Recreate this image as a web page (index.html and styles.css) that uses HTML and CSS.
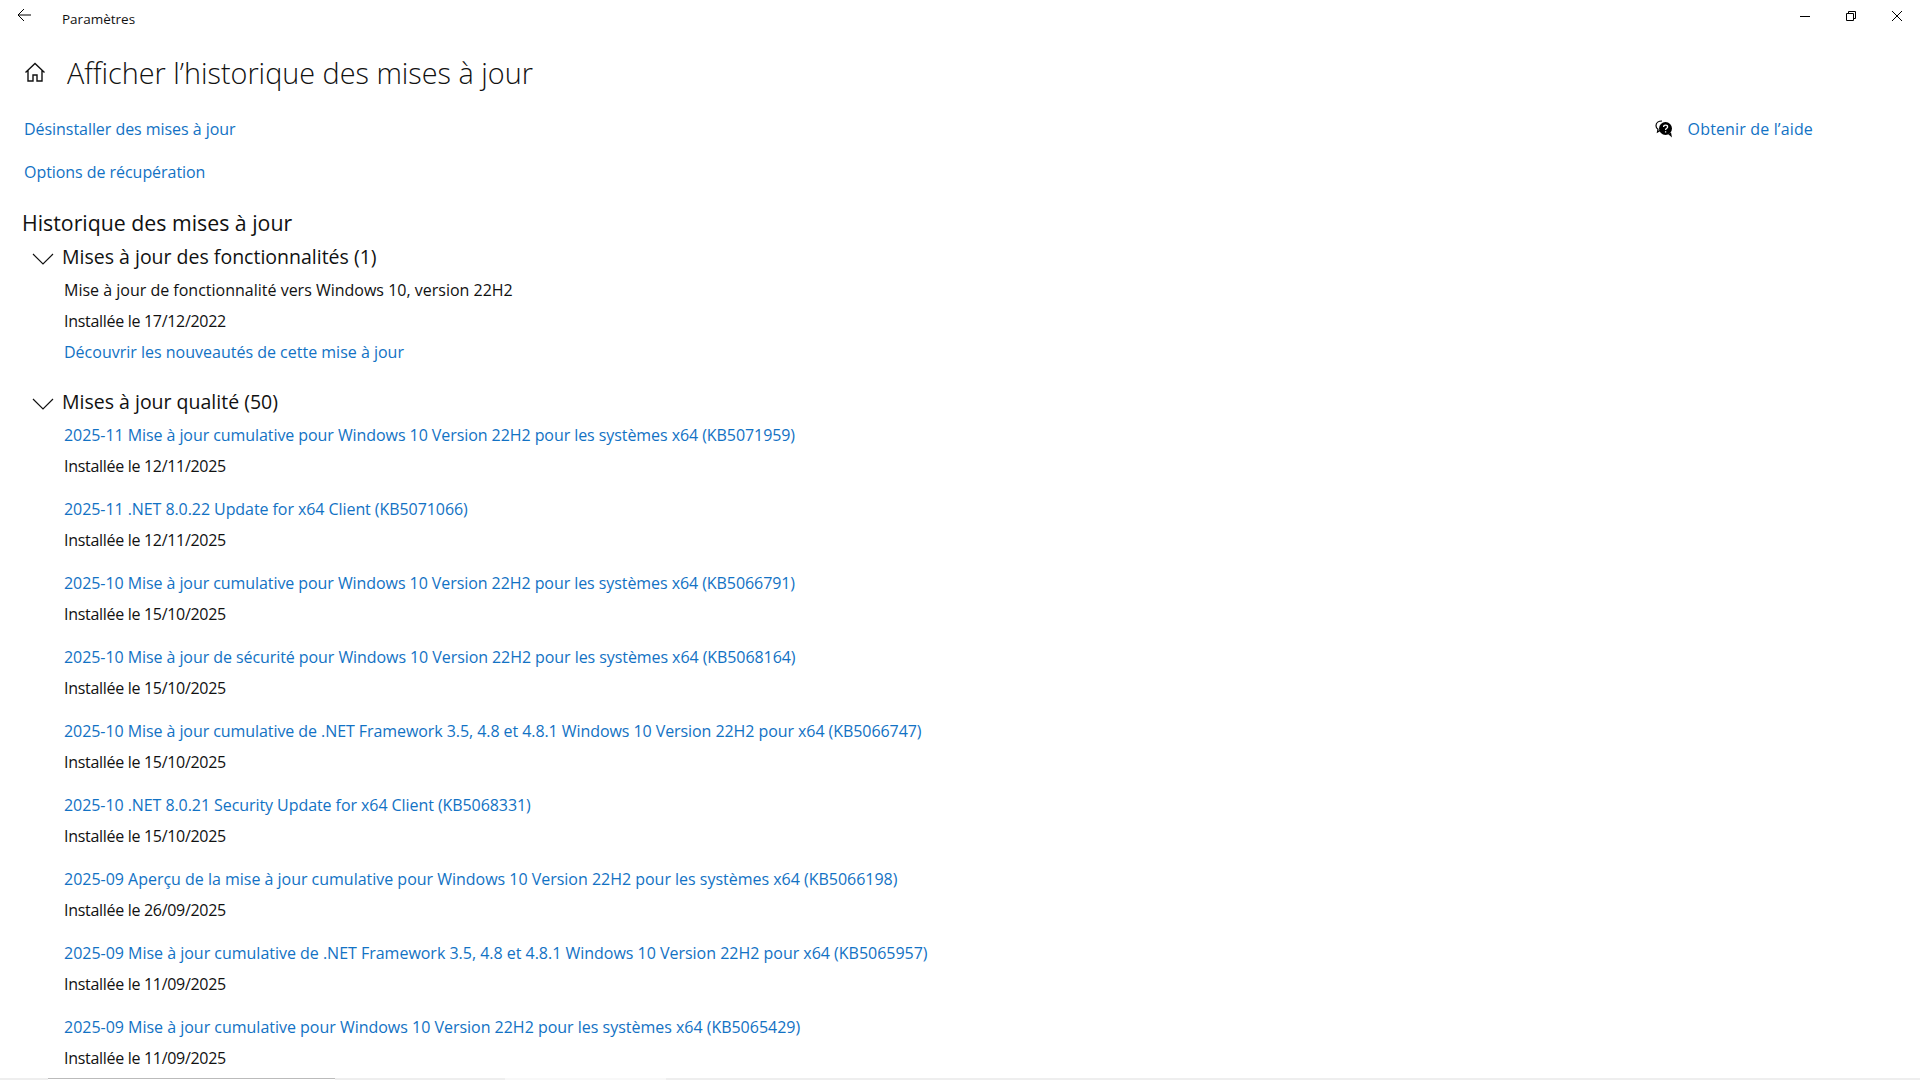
FILE: index.html
```html
<!DOCTYPE html>
<html lang="fr">
<head>
    <meta charset="UTF-8">
    <title>Paramètres</title>
    <link rel="stylesheet" href="styles.css">
</head>
<body>
    <header class="titlebar">
        <svg class="back" width="16" height="16" viewBox="0 0 16 16"><path d="M15 8H2M8 2L2 8l6 6" fill="none" stroke="#000" stroke-width="1"/></svg>
        <span class="app-name">Paramètres</span>
        <div class="win-controls">
            <svg width="12" height="12" viewBox="0 0 12 12"><path d="M1 6.500h10" stroke="#000" fill="none"/></svg>
            <svg width="12" height="12" viewBox="0 0 12 12"><path d="M1.500 3.500h7v7h-7zM3.500 3.500v-2h7v7h-2" stroke="#000" fill="none"/></svg>
            <svg width="12" height="12" viewBox="0 0 12 12"><path d="M1 1l10 10M11 1L1 11" stroke="#000" fill="none"/></svg>
        </div>
    </header>

    <div class="page-title">
        <svg width="22" height="22" viewBox="0 0 22 22"><path d="M1.500 11.500L11 2.500l9.500 9M4 9.500V20h5v-6h4v6h5V9.500" fill="none" stroke="#111" stroke-width="1.400"/></svg>
        <h1>Afficher l’historique des mises à jour</h1>
    </div>

    <div class="top-links">
        <div class="left-links">
            <a href="#">Désinstaller des mises à jour</a>
            <a href="#">Options de récupération</a>
        </div>
        <div class="help">
            <svg width="18" height="18" viewBox="0 0 18 18">
                <path d="M7 1C3.600 1 1 3 1 5.700c0 1.500.8 2.800 2 3.600L2.500 12l3-1.800" fill="none" stroke="#000" stroke-width="1.200"/>
                <circle cx="10.500" cy="8.500" r="6.500" fill="#000"/>
                <path d="M13 14l4 3.500-1-5z" fill="#000"/>
                <path d="M8.600 7c0-1.200.9-1.800 2-1.800s2 .7 2 1.700c0 1.500-2 1.300-2 3M10.600 11.200v1.300" fill="none" stroke="#fff" stroke-width="1.300"/>
            </svg>
            <a href="#">Obtenir de l’aide</a>
        </div>
    </div>

    <h2>Historique des mises à jour</h2>

    <!-- Fonctionnalités -->
    <section class="group">
        <div class="group-head">
            <svg class="chevron" width="22" height="12" viewBox="0 0 22 12"><path d="M1 1l10 10L21 1" fill="none" stroke="#111" stroke-width="1.200"/></svg>
            <h3>Mises à jour des fonctionnalités (1)</h3>
        </div>
        <div class="feature">
            <p>Mise à jour de fonctionnalité vers Windows 10, version 22H2</p>
            <p class="date">Installée le 17/12/2022</p>
            <p><a href="#">Découvrir les nouveautés de cette mise à jour</a></p>
        </div>
    </section>

    <!-- Qualité -->
    <section class="group quality">
        <div class="group-head">
            <svg class="chevron" width="22" height="12" viewBox="0 0 22 12"><path d="M1 1l10 10L21 1" fill="none" stroke="#111" stroke-width="1.200"/></svg>
            <h3>Mises à jour qualité (50)</h3>
        </div>
        <div class="update"><a href="#">2025-11 Mise à jour cumulative pour Windows 10 Version 22H2 pour les systèmes x64 (KB5071959)</a><p class="date">Installée le 12/11/2025</p></div>
        <div class="update"><a href="#">2025-11 .NET 8.0.22 Update for x64 Client (KB5071066)</a><p class="date">Installée le 12/11/2025</p></div>
        <div class="update"><a href="#">2025-10 Mise à jour cumulative pour Windows 10 Version 22H2 pour les systèmes x64 (KB5066791)</a><p class="date">Installée le 15/10/2025</p></div>
        <div class="update"><a href="#">2025-10 Mise à jour de sécurité pour Windows 10 Version 22H2 pour les systèmes x64 (KB5068164)</a><p class="date">Installée le 15/10/2025</p></div>
        <div class="update"><a href="#">2025-10 Mise à jour cumulative de .NET Framework 3.5, 4.8 et 4.8.1 Windows 10 Version 22H2 pour x64 (KB5066747)</a><p class="date">Installée le 15/10/2025</p></div>
        <div class="update"><a href="#">2025-10 .NET 8.0.21 Security Update for x64 Client (KB5068331)</a><p class="date">Installée le 15/10/2025</p></div>
        <div class="update loose"><a href="#">2025-09 Aperçu de la mise à jour cumulative pour Windows 10 Version 22H2 pour les systèmes x64 (KB5066198)</a><p class="date">Installée le 26/09/2025</p></div>
        <div class="update loose"><a href="#">2025-09 Mise à jour cumulative de .NET Framework 3.5, 4.8 et 4.8.1 Windows 10 Version 22H2 pour x64 (KB5065957)</a><p class="date">Installée le 11/09/2025</p></div>
        <div class="update loose"><a href="#">2025-09 Mise à jour cumulative pour Windows 10 Version 22H2 pour les systèmes x64 (KB5065429)</a><p class="date">Installée le 11/09/2025</p></div>
    </section>

    <div class="taskbar-edge">
        <span class="edge-tab"></span>
        <span class="edge-light"></span>
    </div>
</body>
</html>
```

FILE: styles.css
```css
html, body {
    height: 100%;
}
body {
    font-family: "Open Sans", "Noto Sans", sans-serif;
    font-size: 16px;
    color: #111;
    background-color: #fff;
    margin: 0;
    padding: 0;
    overflow: hidden;
    position: relative;
}
a {
    color: #1272c4;
    text-decoration: none;
}
p {
    margin: 0;
}
.titlebar {
    height: 32px;
    display: flex;
    align-items: center;
    padding-left: 16px;
}
.back {
    margin-top: -3px;
}
.app-name {
    margin-left: 30px;
    font-size: 13.5px;
    margin-top: 5px;
}
.win-controls {
    margin-left: auto;
    display: flex;
    gap: 34px;
    padding-right: 17px;
    margin-top: -1px;
}
.page-title {
    display: flex;
    align-items: center;
    padding-left: 24px;
    margin-top: 12px;
    height: 56px;
}
h1 {
    font-size: 28.8px;
    font-weight: 300;
    margin: 0 0 0 21px;
}
.top-links {
    display: flex;
    justify-content: space-between;
    padding: 17px 0 0 24px;
}
.left-links {
    display: flex;
    flex-direction: column;
    gap: 19px;
}
.left-links a, .help a {
    line-height: 24px;
    font-size: 16px;
    letter-spacing: -0.05px;
}
.help a {
    letter-spacing: 0.15px;
}
.help {
    display: flex;
    align-items: center;
    gap: 15px;
    align-self: flex-start;
    padding-right: 107px;
}
h2 {
    font-size: 21.3px;
    font-weight: 400;
    margin: 24px 0 0 22px;
    line-height: 30px;
}
.group-head {
    display: flex;
    align-items: center;
    padding-left: 32px;
    height: 36px;
    margin-top: 1px;
}
.chevron {
    margin-top: 4px;
}
h3 {
    font-size: 19.5px;
    font-weight: 400;
    margin: 0 0 2px 8px;
}
.feature {
    padding-left: 64px;
}
.feature p {
    line-height: 31px;
}
.quality {
    margin-top: 16px;
}
.update {
    padding-left: 64px;
    line-height: 31px;
    margin-bottom: 12px;
}
.update a {
    letter-spacing: -0.07px;
}
.update.loose a {
    letter-spacing: -0.015px;
}
.date {
    letter-spacing: -0.3px;
}
.taskbar-edge {
    position: absolute;
    left: 0;
    right: 0;
    bottom: 0;
    height: 2px;
    background-color: #eee;
}
.edge-tab {
    position: absolute;
    left: 48px;
    width: 287px;
    height: 1px;
    background-color: #fff;
    border-top: 1px solid #bbb;
}
.edge-light {
    position: absolute;
    left: 505px;
    width: 161px;
    height: 2px;
    background-color: #f8f8f8;
}
```
